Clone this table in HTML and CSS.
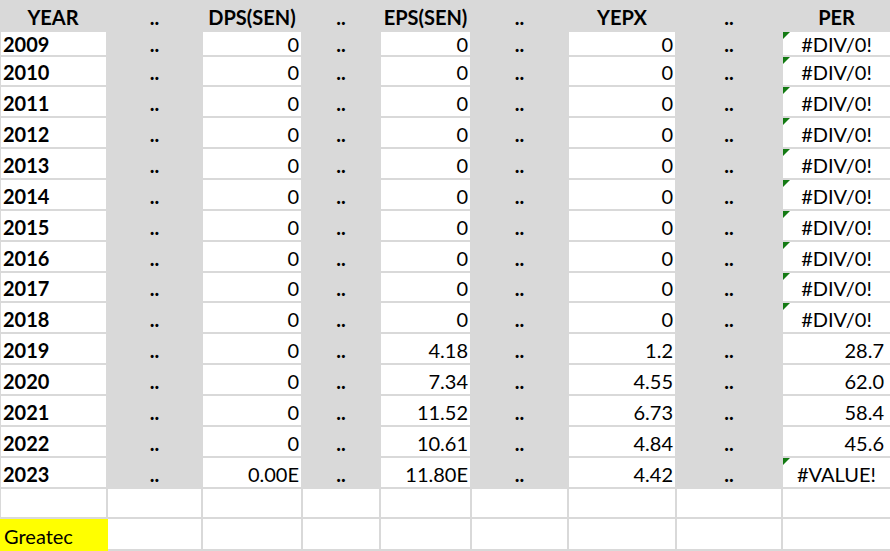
FILE: index.html
```html
<!DOCTYPE html>
<html>
<head>
<meta charset="utf-8">
<title>Sheet</title>
<link rel="stylesheet" href="styles.css">
</head>
<body>
<div class="sheet">
  <div class="c g hd">YEAR</div><div class="c g hd">..</div><div class="c g hd">DPS(SEN)</div><div class="c g hd">..</div><div class="c g hd">EPS(SEN)</div><div class="c g hd">..</div><div class="c g hd">YEPX</div><div class="c g hd">..</div><div class="c g hd">PER</div>

  <div class="c w a yr first">2009</div><div class="c g dots first">..</div><div class="c w num first">0</div><div class="c g dots first">..</div><div class="c w num first">0</div><div class="c g dots first">..</div><div class="c w num first">0</div><div class="c g dots first">..</div><div class="c w err first">#DIV/0!</div>
  <div class="c w a yr">2010</div><div class="c g dots">..</div><div class="c w num">0</div><div class="c g dots">..</div><div class="c w num">0</div><div class="c g dots">..</div><div class="c w num">0</div><div class="c g dots">..</div><div class="c w err">#DIV/0!</div>
  <div class="c w a yr">2011</div><div class="c g dots">..</div><div class="c w num">0</div><div class="c g dots">..</div><div class="c w num">0</div><div class="c g dots">..</div><div class="c w num">0</div><div class="c g dots">..</div><div class="c w err">#DIV/0!</div>
  <div class="c w a yr">2012</div><div class="c g dots">..</div><div class="c w num">0</div><div class="c g dots">..</div><div class="c w num">0</div><div class="c g dots">..</div><div class="c w num">0</div><div class="c g dots">..</div><div class="c w err">#DIV/0!</div>
  <div class="c w a yr">2013</div><div class="c g dots">..</div><div class="c w num">0</div><div class="c g dots">..</div><div class="c w num">0</div><div class="c g dots">..</div><div class="c w num">0</div><div class="c g dots">..</div><div class="c w err">#DIV/0!</div>
  <div class="c w a yr">2014</div><div class="c g dots">..</div><div class="c w num">0</div><div class="c g dots">..</div><div class="c w num">0</div><div class="c g dots">..</div><div class="c w num">0</div><div class="c g dots">..</div><div class="c w err">#DIV/0!</div>
  <div class="c w a yr">2015</div><div class="c g dots">..</div><div class="c w num">0</div><div class="c g dots">..</div><div class="c w num">0</div><div class="c g dots">..</div><div class="c w num">0</div><div class="c g dots">..</div><div class="c w err">#DIV/0!</div>
  <div class="c w a yr">2016</div><div class="c g dots">..</div><div class="c w num">0</div><div class="c g dots">..</div><div class="c w num">0</div><div class="c g dots">..</div><div class="c w num">0</div><div class="c g dots">..</div><div class="c w err">#DIV/0!</div>
  <div class="c w a yr">2017</div><div class="c g dots">..</div><div class="c w num">0</div><div class="c g dots">..</div><div class="c w num">0</div><div class="c g dots">..</div><div class="c w num">0</div><div class="c g dots">..</div><div class="c w err">#DIV/0!</div>
  <div class="c w a yr">2018</div><div class="c g dots">..</div><div class="c w num">0</div><div class="c g dots">..</div><div class="c w num">0</div><div class="c g dots">..</div><div class="c w num">0</div><div class="c g dots">..</div><div class="c w err">#DIV/0!</div>
  <div class="c w a yr">2019</div><div class="c g dots">..</div><div class="c w num">0</div><div class="c g dots">..</div><div class="c w num">4.18</div><div class="c g dots">..</div><div class="c w num">1.2</div><div class="c g dots">..</div><div class="c w num per">28.7</div>
  <div class="c w a yr">2020</div><div class="c g dots">..</div><div class="c w num">0</div><div class="c g dots">..</div><div class="c w num">7.34</div><div class="c g dots">..</div><div class="c w num">4.55</div><div class="c g dots">..</div><div class="c w num per">62.0</div>
  <div class="c w a yr">2021</div><div class="c g dots">..</div><div class="c w num">0</div><div class="c g dots">..</div><div class="c w num">11.52</div><div class="c g dots">..</div><div class="c w num">6.73</div><div class="c g dots">..</div><div class="c w num per">58.4</div>
  <div class="c w a yr">2022</div><div class="c g dots">..</div><div class="c w num">0</div><div class="c g dots">..</div><div class="c w num">10.61</div><div class="c g dots">..</div><div class="c w num">4.84</div><div class="c g dots">..</div><div class="c w num per">45.6</div>
  <div class="c w a yr">2023</div><div class="c g dots">..</div><div class="c w num">0.00E</div><div class="c g dots">..</div><div class="c w num">11.80E</div><div class="c g dots">..</div><div class="c w num">4.42</div><div class="c g dots">..</div><div class="c w err">#VALUE!</div>

  <div class="c w a"></div><div class="c w"></div><div class="c w"></div><div class="c w"></div><div class="c w"></div><div class="c w"></div><div class="c w"></div><div class="c w"></div><div class="c w"></div>
  <div class="c y">Greatec</div><div class="c w"></div><div class="c w"></div><div class="c w"></div><div class="c w"></div><div class="c w"></div><div class="c w"></div><div class="c w"></div><div class="c w"></div>
</div>
</body>
</html>
```

FILE: styles.css
```css
:root {
  --fill: #d9d9d9;
  --grid: #d9d9d9;
}

html, body {
  margin: 0;
  padding: 0;
  background: #ffffff;
  overflow: hidden;
}

.sheet {
  display: grid;
  grid-template-columns: 108px 95px 100px 78px 91px 97px 108px 106px 107px;
  grid-template-rows: 32px 24.5px repeat(15, 30.87px) 31.5px;
  width: 890px;
  font-family: Lato, "Liberation Sans", sans-serif;
  font-size: 20px;
  line-height: 20px;
  color: #000;
}

.c {
  box-sizing: border-box;
  display: flex;
  align-items: flex-end;
  padding: 0 2px 3px 2px;
  border-right: 2px solid var(--grid);
  border-bottom: 2px solid var(--grid);
  white-space: nowrap;
  overflow: hidden;
  position: relative;
}

.c:nth-child(9n) {
  border-right: 0;
}

.first {
  padding-bottom: 1px;
}

.w {
  background: #ffffff;
}

.g {
  background: var(--fill);
  border-color: var(--fill);
}

.a {
  border-left: 1px solid var(--grid);
}

.hd {
  font-weight: 700;
  justify-content: center;
}

.yr {
  font-weight: 700;
}

.dots {
  font-weight: 700;
  justify-content: center;
}

.num {
  justify-content: flex-end;
}

.per {
  padding-right: 6px;
}

.err {
  justify-content: center;
  overflow: visible;
}

.err::before {
  content: "";
  position: absolute;
  left: 0;
  top: 0;
  width: 0;
  height: 0;
  border-top: 7px solid #137a13;
  border-right: 7px solid transparent;
}

.y {
  background: #ffff00;
  border-color: #ffff00;
  padding-left: 4px;
}
```
